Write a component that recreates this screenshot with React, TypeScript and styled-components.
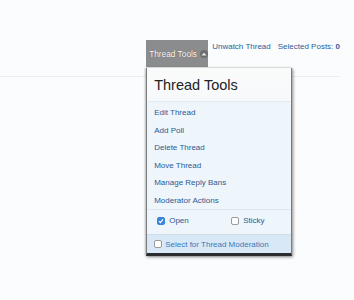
import React from "react";
import styled, { createGlobalStyle } from "styled-components";

const Global = createGlobalStyle`
  html, body { margin: 0; padding: 0; background: #fbfcfd; }
  body { font-family: "Liberation Sans", Arial, sans-serif; width: 354px; height: 300px; overflow: hidden; }
`;

const Page = styled.div`
  display: flex;
  flex-direction: column;
  padding-top: 40px;
`;

const TopBar = styled.div`
  display: flex;
  justify-content: flex-end;
  align-items: flex-start;
  padding-right: 14px;
  gap: 4px;
  height: 27px;
  white-space: nowrap;
`;

const ToolsWrap = styled.div`
  position: relative;
`;

const ToolsButton = styled.div`
  width: 62px;
  height: 27px;
  background: #8b8c8e;
  color: #fff;
  font-size: 8.3px;
  display: flex;
  align-items: center;
  gap: 3px;
  padding-left: 3px;
  box-sizing: border-box;
  text-shadow: 0 0 1px rgba(0,0,0,0.5);
`;

const Arrow = styled.span`
  width: 8px;
  height: 8px;
  border-radius: 50%;
  background: #6d6e70;
  display: inline-flex;
  align-items: center;
  justify-content: center;
`;

const TopLink = styled.a`
  color: #2e5c94;
  font-size: 8px;
  text-decoration: none;
  line-height: 14px;
  & + & { margin-left: 3px; }
  b { font-weight: bold; }
`;

const Rule = styled.div`
  height: 1px;
  background: #eaeef2;
  margin-top: 9px;
  margin-right: 14px;
`;

const Menu = styled.div`
  position: absolute;
  top: 28px;
  left: 0;
  width: 146px;
  box-sizing: border-box;
  border: 1px solid #7a7b7d;
  border-top: none;
  border-bottom: 3px solid #2a2c30;
  box-shadow: 1px 1px 3px rgba(0,0,0,0.45), -1px 0 2px rgba(0,0,0,0.2);
  background: #fff;
  display: flex;
  flex-direction: column;
  white-space: nowrap;
`;

const MenuTitle = styled.div`
  height: 34px;
  display: flex;
  align-items: center;
  padding-left: 7px;
  font-size: 14.5px;
  color: #222;
  background: linear-gradient(#fbfbfb, #f6f9fb);
  border-bottom: 1px solid #e3ebf3;
  box-sizing: border-box;
`;

const Items = styled.div`
  display: flex;
  flex-direction: column;
  background: #eef5fb;
  padding: 2px 0 0;
  border-bottom: 1px solid #dfe8f1;
`;

const Item = styled.a`
  height: 17.5px;
  display: flex;
  align-items: center;
  padding-left: 7px;
  font-size: 8px;
  color: #2d5a93;
  text-decoration: none;
`;

const Checks = styled.div`
  display: grid;
  grid-template-columns: 74px 1fr;
  align-items: start;
  height: 25px;
  padding: 6px 0 0 10px;
  background: #eef5fb;
  border-bottom: 1px solid #cfdcea;
  box-sizing: border-box;
`;

const Footer = styled.div`
  height: 18px;
  display: flex;
  align-items: center;
  padding-left: 7px;
  background: #d8e8f7;
  color: #3a79b6;
  font-size: 8px;
  gap: 3px;
`;

const CheckLabel = styled.label`
  display: flex;
  align-items: center;
  gap: 4px;
  font-size: 8px;
  color: #2d5a93;
`;

const Box = styled.span<{ $checked?: boolean }>`
  width: 8px;
  height: 8px;
  border-radius: 2px;
  box-sizing: border-box;
  border: 1px solid ${(p) => (p.$checked ? "#3a84d6" : "#9a9a9a")};
  background: ${(p) => (p.$checked ? "#3b86dc" : "#fff")};
  display: inline-flex;
  align-items: center;
  justify-content: center;
`;

const Check = () => (
  <svg width="6" height="6" viewBox="0 0 6 6">
    <path d="M1 3.2 L2.4 4.6 L5 1.4" stroke="#fff" strokeWidth="1.2" fill="none" />
  </svg>
);

export default function App() {
  return (
    <>
      <Global />
      <Page>
        <TopBar>
          <ToolsWrap>
            <ToolsButton>
              Thread Tools
              <Arrow>
                <svg width="6" height="4" viewBox="0 0 6 4">
                  <path d="M0.5 3.5 L3 0.8 L5.5 3.5 Z" fill="#e8e8e8" />
                </svg>
              </Arrow>
            </ToolsButton>
            <Menu>
              <MenuTitle>Thread Tools</MenuTitle>
              <Items>
                <Item>Edit Thread</Item>
                <Item>Add Poll</Item>
                <Item>Delete Thread</Item>
                <Item>Move Thread</Item>
                <Item>Manage Reply Bans</Item>
                <Item>Moderator Actions</Item>
              </Items>
              <Checks>
                <CheckLabel>
                  <Box $checked>
                    <Check />
                  </Box>
                  Open
                </CheckLabel>
                <CheckLabel>
                  <Box />
                  Sticky
                </CheckLabel>
              </Checks>
              <Footer>
                <Box />
                Select for Thread Moderation
              </Footer>
            </Menu>
          </ToolsWrap>
          <TopLink>Unwatch Thread</TopLink>
          <TopLink>
            Selected Posts: <b>0</b>
          </TopLink>
        </TopBar>
        <Rule />
      </Page>
    </>
  );
}
